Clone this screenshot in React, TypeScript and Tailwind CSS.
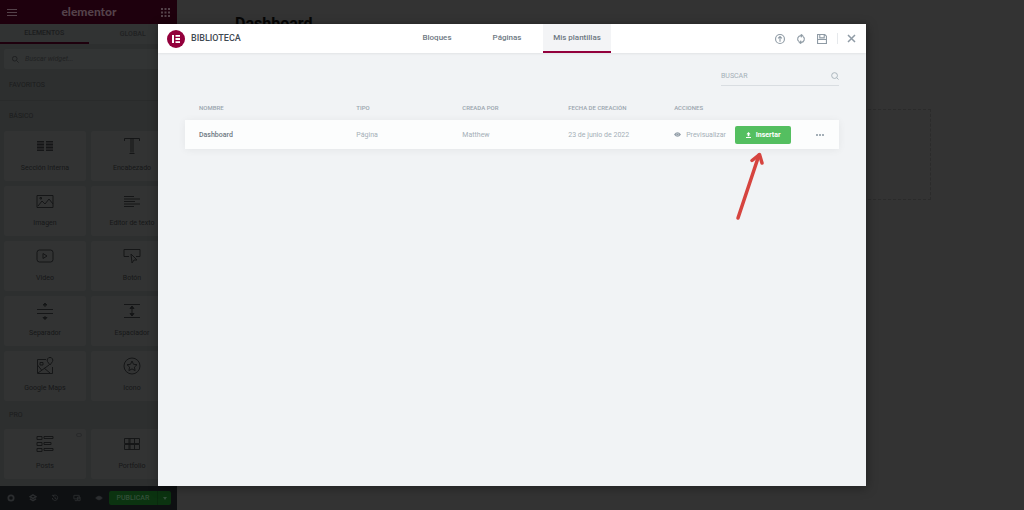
import React, { useState } from 'react';

type WidgetItem = { name: string; icon: React.ReactNode; locked?: boolean };

const Drawing = ({ children, className = 'w-[18px] h-[18px]' }: { children: React.ReactNode; className?: string }) => (
  <svg viewBox="0 0 18 18" fill="none" stroke="currentColor" strokeWidth="1" className={className} aria-hidden="true">
    {children}
  </svg>
);

const basicWidgets: WidgetItem[] = [
  {
    name: 'Sección Interna',
    icon: (
      <Drawing>
        <path d="M1 4h7v10H1zM10 4h7v10h-7z" fill="currentColor" fillOpacity="0.5" stroke="none" />
        <path d="M1 4.500h7M1 7.500h7M1 10.500h7M1 13.500h7M10 4.500h7M10 7.500h7M10 10.500h7M10 13.500h7" />
      </Drawing>
    ),
  },
  { name: 'Encabezado', icon: <Drawing><path d="M1.500 4V1.500h15V4M8 1.500v14M10 1.500v14M6.500 16.500h5" /></Drawing> },
  { name: 'Imagen', icon: <Drawing><path d="M1 3.500h16v12H1zM2 14l4-5 3 3 4-5 4 5M4 5.500h1.500V7H4z" /></Drawing> },
  { name: 'Editor de texto', icon: <Drawing><path d="M1 4.500h10M1 7h16M1 9.500h11M1 12h16M1 14.500h10" /></Drawing> },
  {
    name: 'Video',
    icon: (
      <Drawing>
        <rect x="1" y="3" width="16" height="12" rx="2.500" />
        <path d="M7 6.500v5l4-2.500z" />
      </Drawing>
    ),
  },
  { name: 'Botón', icon: <Drawing><path d="M6 9.500H1v-7h16v7h-4M8 7l1 9 2-3h3z" /></Drawing> },
  {
    name: 'Separador',
    icon: (
      <Drawing>
        <path d="M1 7.500h16M1 11.500h16M9 2v3M9 14v3" />
        <path d="M7 3l2-2 2 2zM7 15.500l2 2 2-2z" fill="currentColor" />
      </Drawing>
    ),
  },
  {
    name: 'Espaciador',
    icon: (
      <Drawing>
        <path d="M1 2.500h16M1 15.500h16M9 4v10" />
        <path d="M7 6.500L9 4l2 2.500zM7 11.500L9 14l2-2.500z" fill="currentColor" />
      </Drawing>
    ),
  },
  {
    name: 'Google Maps',
    icon: (
      <Drawing>
        <path d="M10 2.500H1.500v14h15V10M2 16L13 8M8 11l6 5M1.500 8l4 5" />
        <path d="M14 8l-2.500-3.500a2.800 2.800 0 1 1 5 0zM4 5.500h3V8H4z" />
      </Drawing>
    ),
  },
  {
    name: 'Icono',
    icon: (
      <Drawing>
        <circle cx="9" cy="9" r="8" />
        <path d="M9 4l1.500 3.300 3.500.4-2.600 2.400.7 3.500L9 11.900l-3.100 1.700.7-3.500L4 7.700l3.500-.4z" />
      </Drawing>
    ),
  },
];

const proWidgets: WidgetItem[] = [
  {
    name: 'Posts',
    locked: true,
    icon: <Drawing><path d="M1 1.500h5v3H1zM1 7.500h5v3H1zM1 13.500h5v3H1zM8 1.500h9v2H8zM8 7.500h7v2H8zM8 13.500h9v2H8z" /></Drawing>,
  },
  { name: 'Portfolio', icon: <Drawing><path d="M1.500 3.500h15v5h-15zM1.500 9.500h15v5h-15zM6 3.500v5M7 3.500v5M11.500 3.500v5M6 9.500v5M7 9.500v5M11.500 9.500v5" /></Drawing> },
];

const footerTools = [
  { label: 'Ajustes', icon: <Drawing className="w-2 h-2"><circle cx="9" cy="9" r="6" strokeWidth="4" /></Drawing> },
  { label: 'Navegador', icon: <Drawing className="w-2 h-2"><path d="M9 2l7 4-7 4-7-4zM2 11l7 4 7-4" strokeWidth="3" /></Drawing> },
  { label: 'Historial', icon: <Drawing className="w-2 h-2"><path d="M3 9a6 6 0 1 0 2-5M2 3h4v4M9 6v4h3" strokeWidth="2" /></Drawing> },
  { label: 'Responsive', icon: <Drawing className="w-2 h-2"><path d="M2 3h12v8H2zM10 7h6v8h-6zM4 15h5" strokeWidth="2" /></Drawing> },
  { label: 'Vista previa', icon: <Drawing className="w-2 h-2"><path d="M1 9q8-9 16 0-8 9-16 0z" fill="currentColor" /><circle cx="9" cy="9" r="2" /></Drawing> },
];

const libraryTabs = ['Bloques', 'Páginas', 'Mis plantillas'];

const templates = [{ name: 'Dashboard', type: 'Página', author: 'Matthew', date: '23 de junio de 2022' }];

function WidgetGrid({ items }: { items: WidgetItem[] }) {
  return (
    <div className="grid grid-cols-2 gap-[5px] px-1">
      {items.map((item) => (
        <button key={item.name} className="relative flex h-[50px] flex-col items-center gap-1 rounded-xs bg-[#323333] pt-[6px] text-[#151617]">
          {item.icon}
          <span className="text-[7px] leading-[18px] text-[#161718]">{item.name}</span>
          {item.locked && <span className="absolute top-1 right-1 h-1 w-[6px] rounded-xs border border-[#292a2b]" />}
        </button>
      ))}
    </div>
  );
}

function Sidebar() {
  return (
    <aside className="flex w-[177px] shrink-0 flex-col overflow-hidden bg-[#2d2f2f] text-[#1b1c1d]">
      <header className="flex h-6 shrink-0 items-center justify-between bg-[#1e000d] px-[7px] text-[#54424a]">
        <button aria-label="Menú">
          <svg viewBox="0 0 10 9" className="h-[9px] w-[10px]" stroke="currentColor" strokeWidth="1">
            <path d="M0 1.500h10M0 4.500h10M0 7.500h10" />
          </svg>
        </button>
        <span className="font-['Lato',sans-serif] text-[12px] leading-4 font-black">elementor</span>
        <button aria-label="Widgets">
          <svg viewBox="0 0 9 9" className="h-[9px] w-[9px]" fill="currentColor">
            <path d="M0 0h2v2H0zM3.500 0h2v2h-2zM7 0h2v2H7zM0 3.500h2v2H0zM3.500 3.500h2v2h-2zM7 3.500h2v2H7zM0 7h2v2H0zM3.500 7h2v2h-2zM7 7h2v2H7z" />
          </svg>
        </button>
      </header>

      <nav className="grid h-5 shrink-0 grid-cols-2 bg-[#313333] text-[7px] font-medium">
        <button className="border-b-2 border-[#1e000d]">ELEMENTOS</button>
        <button className="text-[#202122]">GLOBAL</button>
      </nav>

      <label className="mx-1 mt-[5px] flex h-5 shrink-0 items-center gap-[6px] rounded-xs bg-[#323434] px-2">
        <Drawing className="h-[7px] w-[7px]">
          <circle cx="7" cy="7" r="6" strokeWidth="2" />
          <path d="M12 12l5 5" strokeWidth="2" />
        </Drawing>
        <input aria-label="Buscar widget" placeholder="Buscar widget..." className="min-w-0 flex-1 text-[7px] outline-none placeholder:text-[#202122] placeholder:italic" />
      </label>

      <h3 className="mt-[2px] flex h-[30px] shrink-0 items-center border-b border-[#292b2b] px-[9px] text-[7px]">FAVORITOS</h3>
      <h3 className="flex h-[30px] shrink-0 items-center px-[9px] text-[7px]">BÁSICO</h3>
      <div className="min-h-0 flex-1 overflow-hidden">
        <WidgetGrid items={basicWidgets} />
        <h3 className="flex h-7 items-center px-[9px] text-[7px]">PRO</h3>
        <WidgetGrid items={proWidgets} />
      </div>

      <footer className="flex h-6 shrink-0 items-center bg-[#0e1012] pr-[6px] pl-[7px] text-[#2b2d2f]">
        <div className="flex flex-1 items-center gap-[14px]">
          {footerTools.map((tool) => (
            <button key={tool.label} aria-label={tool.label}>{tool.icon}</button>
          ))}
        </div>
        <button className="h-[14px] w-12 rounded-l-xs bg-[#0b3310] text-[7px] font-medium text-[#33503a]">PUBLICAR</button>
        <button aria-label="Opciones de guardado" className="flex h-[14px] w-[14px] items-center justify-center rounded-r-xs border-l border-[#0a2a0e] bg-[#0b3310] text-[#33503a]">
          <svg viewBox="0 0 4 3" className="h-[3px] w-1" fill="currentColor"><path d="M0 0h4L2 3z" /></svg>
        </button>
      </footer>
    </aside>
  );
}

function RedArrow() {
  return (
    <svg viewBox="0 0 32 72" className="pointer-events-none absolute top-[25px] left-0 h-[72px] w-8" fill="none" stroke="#d6443f" strokeWidth="3.500" strokeLinecap="round" strokeLinejoin="round" aria-hidden="true">
      <path d="M3 67L24 4" />
      <path d="M17 9.500L24.500 3.500 27 12" />
    </svg>
  );
}

export default function App() {
  const [active, setActive] = useState('Mis plantillas');
  const [query, setQuery] = useState('');

  const rows = templates.filter((t) => t.name.toLowerCase().includes(query.toLowerCase()));

  return (
    <div className="relative flex h-screen overflow-hidden bg-[#333333] font-['Roboto',sans-serif]">
      <Sidebar />
      <main className="flex-1 px-[58px] pt-[14px]">
        <h1 className="text-[16px] leading-5 font-bold text-[#060606]">Dashboard</h1>
        <div className="mt-[75px] mr-[35px] ml-[34px] h-[91px] border border-dashed border-[#2b2b2b]" />
      </main>

      <div className="absolute inset-0 flex px-[158px] py-6">
        <section role="dialog" aria-label="Biblioteca" className="flex min-w-0 flex-1 flex-col bg-[#f1f3f5] shadow-[1px_2px_10px_rgba(0,0,0,0.35)]">
          <header className="grid h-[29px] shrink-0 grid-cols-[1fr_auto_1fr] items-stretch bg-white pr-[10px] shadow-[0_0_3px_rgba(0,0,0,0.12)]">
            <div className="flex items-center gap-[6px] pl-[9px]">
              <svg viewBox="0 0 18 18" className="h-[18px] w-[18px]" aria-hidden="true">
                <circle cx="9" cy="9" r="9" fill="#93003c" />
                <path d="M5 5h2v8H5zM8.500 5H13v1.800H8.500zM8.500 8.100H13v1.800H8.500zM8.500 11.200H13V13H8.500z" fill="#fff" />
              </svg>
              <h2 className="text-[9px] font-medium text-[#3f4a52]">BIBLIOTECA</h2>
            </div>

            <nav className="flex gap-[2px]">
              {libraryTabs.map((tab) => (
                <button
                  key={tab}
                  onClick={() => setActive(tab)}
                  className={`w-[68px] border-b-2 text-[8px] font-medium text-[#6d7882] ${
                    active === tab ? 'border-[#93003c] bg-[#f3f4f6]' : 'border-transparent'
                  }`}
                >
                  {tab}
                </button>
              ))}
            </nav>

            <div className="flex items-center justify-end text-[#8f9ba5]">
              <div className="flex items-center gap-[11px] pr-[10px]">
                <button aria-label="Importar plantilla">
                  <Drawing className="h-[10px] w-[10px]">
                    <circle cx="9" cy="9" r="8" strokeWidth="2" />
                    <path d="M9 14V5M5.500 8L9 4.500 12.500 8" strokeWidth="2" />
                  </Drawing>
                </button>
                <button aria-label="Sincronizar">
                  <Drawing className="h-[10px] w-[10px]">
                    <path d="M5 13.500A6 6 0 0 1 9 3M13 4.500A6 6 0 0 1 9 15" strokeWidth="2" />
                    <path d="M9 0l4 3-4 3zM9 12l-4 3 4 3z" fill="currentColor" />
                  </Drawing>
                </button>
                <button aria-label="Guardar">
                  <Drawing className="h-[10px] w-[10px]">
                    <path d="M1 1h13l3 3v13H1zM5 1v6h8V1M1 10h16" strokeWidth="2" />
                  </Drawing>
                </button>
              </div>
              <button aria-label="Cerrar" className="flex h-[11px] items-center border-l border-[#e6e9ec] pl-[9px]">
                <Drawing className="h-[9px] w-[9px]">
                  <path d="M2 2l14 14M16 2L2 16" strokeWidth="3" />
                </Drawing>
              </button>
            </div>
          </header>

          <div className="flex-1 px-[27px] pt-[14px]">
            <label className="ml-auto flex h-[19px] w-[118px] items-center border-b border-[#d9dde1] text-[#a4afb7]">
              <input
                aria-label="Buscar"
                placeholder="BUSCAR"
                value={query}
                onChange={(e) => setQuery(e.target.value)}
                className="min-w-0 flex-1 text-[7px] outline-none placeholder:text-[#a4afb7]"
              />
              <Drawing className="h-2 w-2">
                <circle cx="8" cy="8" r="6.500" strokeWidth="2" />
                <path d="M13 13l4 4" strokeWidth="2" />
              </Drawing>
            </label>

            <table className="mt-[10px] w-full table-fixed text-left text-[#a4afb7]">
              <colgroup>
                <col className="w-[26.2%]" />
                <col className="w-[16.2%]" />
                <col className="w-[16.2%]" />
                <col className="w-[16.2%]" />
                <col />
              </colgroup>
              <thead>
                <tr className="h-6 text-[6px] leading-3 text-[#99a4ad]">
                  <th className="pl-[14px] font-medium">NOMBRE</th>
                  <th className="font-medium">TIPO</th>
                  <th className="font-medium">CREADA POR</th>
                  <th className="font-medium">FECHA DE CREACIÓN</th>
                  <th className="font-medium">ACCIONES</th>
                </tr>
              </thead>
              <tbody>
                {rows.map((t) => (
                  <tr key={t.name} className="h-[29px] bg-[#fcfdfd] text-[7px] leading-3 shadow-[0_1px_8px_rgba(0,0,0,0.06)]">
                    <td className="pl-[14px] font-medium text-[#6d7882]">{t.name}</td>
                    <td>{t.type}</td>
                    <td>{t.author}</td>
                    <td>{t.date}</td>
                    <td>
                      <div className="flex items-center">
                        <button className="flex w-[61px] items-center gap-[5px]">
                          <svg viewBox="0 0 18 18" className="h-[7px] w-[7px]" aria-hidden="true">
                            <path d="M0 9q9-12 18 0-9 12-18 0z" fill="#8f9ba5" />
                            <circle cx="9" cy="9" r="3" fill="none" stroke="#fff" />
                          </svg>
                          Previsualizar
                        </button>
                        <div className="relative">
                          <button className="flex h-[18px] w-14 items-center justify-center gap-[5px] rounded-xs bg-[#54bf60] font-bold text-white">
                            <svg viewBox="0 0 12 14" className="h-[6px] w-[5px]" fill="currentColor" aria-hidden="true">
                              <path d="M6 0l5 5H8v5H4V5H1zM0 11.500h12V14H0z" />
                            </svg>
                            Insertar
                          </button>
                          <RedArrow />
                        </div>
                        <button aria-label="Más acciones" className="ml-6">
                          <svg viewBox="0 0 10 2" className="h-[2px] w-[10px]" fill="#a4afb7"><path d="M1 0h2v2H1zM4 0h2v2H4zM7 0h2v2H7z" /></svg>
                        </button>
                      </div>
                    </td>
                  </tr>
                ))}
              </tbody>
            </table>
          </div>
        </section>
      </div>
    </div>
  );
}
